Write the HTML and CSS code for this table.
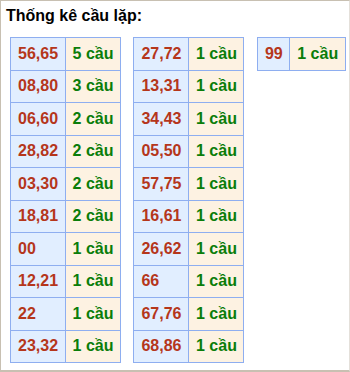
FILE: index.html
```html
<!DOCTYPE html>
<html lang="vi">
<head>
<meta charset="utf-8">
<link rel="stylesheet" href="styles.css">
</head>
<body>
<div class="box">
  <div class="title">Thống kê cầu lặp:</div>
  <div class="tables">
    <table class="tk">
      <tr><td class="num">56,65</td><td class="cnt">5 cầu</td></tr>
      <tr><td class="num">08,80</td><td class="cnt">3 cầu</td></tr>
      <tr><td class="num">06,60</td><td class="cnt">2 cầu</td></tr>
      <tr><td class="num">28,82</td><td class="cnt">2 cầu</td></tr>
      <tr><td class="num">03,30</td><td class="cnt">2 cầu</td></tr>
      <tr><td class="num">18,81</td><td class="cnt">2 cầu</td></tr>
      <tr><td class="num">00</td><td class="cnt">1 cầu</td></tr>
      <tr><td class="num">12,21</td><td class="cnt">1 cầu</td></tr>
      <tr><td class="num">22</td><td class="cnt">1 cầu</td></tr>
      <tr><td class="num">23,32</td><td class="cnt">1 cầu</td></tr>
    </table>
    <table class="tk">
      <tr><td class="num">27,72</td><td class="cnt">1 cầu</td></tr>
      <tr><td class="num">13,31</td><td class="cnt">1 cầu</td></tr>
      <tr><td class="num">34,43</td><td class="cnt">1 cầu</td></tr>
      <tr><td class="num">05,50</td><td class="cnt">1 cầu</td></tr>
      <tr><td class="num">57,75</td><td class="cnt">1 cầu</td></tr>
      <tr><td class="num">16,61</td><td class="cnt">1 cầu</td></tr>
      <tr><td class="num">26,62</td><td class="cnt">1 cầu</td></tr>
      <tr><td class="num">66</td><td class="cnt">1 cầu</td></tr>
      <tr><td class="num">67,76</td><td class="cnt">1 cầu</td></tr>
      <tr><td class="num">68,86</td><td class="cnt">1 cầu</td></tr>
    </table>
    <table class="tk">
      <tr><td class="num">99</td><td class="cnt">1 cầu</td></tr>
    </table>
  </div>
</div>
</body>
</html>
```
FILE: styles.css
```css
html, body {
  margin: 0;
  padding: 0;
  background: #ffffff;
}
.box {
  box-sizing: border-box;
  width: 350px;
  height: 372px;
  border-top: 1px solid #c8c0b2;
  border-left: 1px solid #c8c0b2;
  border-right: 1px solid #e4e0da;
  border-bottom: 2px solid #c8c0b2;
  padding: 6px 0 0 9px;
  font-family: "Liberation Sans", Arial, sans-serif;
}
.title {
  font-size: 16px;
  font-weight: bold;
  color: #000;
  line-height: 18px;
  margin-left: -4px;
}
.tables {
  display: flex;
  align-items: flex-start;
  gap: 12.5px;
  margin-top: 12px;
}
.tk {
  border-collapse: collapse;
  font-size: 16px;
  font-weight: bold;
}
.tk td {
  border: 1px solid #8eaef0;
  padding: 0 6.5px 0 7px;
  height: 31.5px;
  line-height: 18px;
  white-space: nowrap;
  text-align: left;
}
.num {
  background: #e1eeff;
  color: #b5361b;
}
.cnt {
  background: #fdf2e2;
  color: #0a7d0a;
}
```
